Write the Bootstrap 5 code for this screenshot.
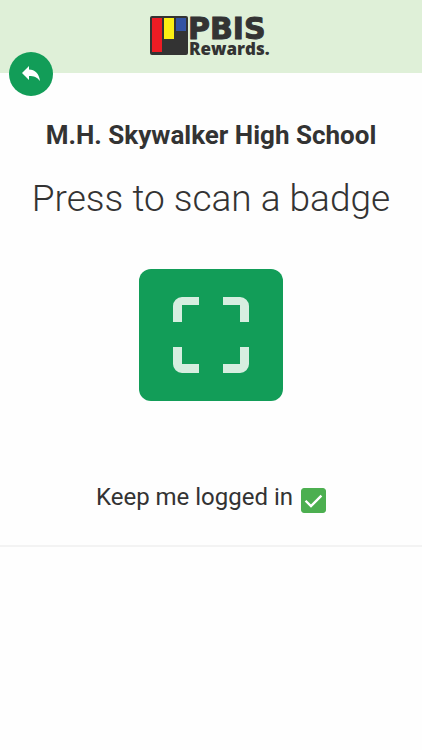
<!DOCTYPE html>
<html lang="en">
<head>
<meta charset="utf-8">
<meta name="viewport" content="width=device-width, initial-scale=1">
<title>PBIS Rewards</title>
<link href="https://cdn.jsdelivr.net/npm/bootstrap@5.3.0/dist/css/bootstrap.min.css" rel="stylesheet">
<style>
  body { font-family: Roboto, "Liberation Sans", sans-serif; color: #333; background: #fefefe; }
  .top-bar { background: #dff0d8; height: 73px; }
  .brand-logo { width: 124px; height: 65px; }
  .brand-logo text { fill: #333; }
  .logo-name { font: 700 30px "DejaVu Sans", sans-serif; }
  .logo-sub { font: 800 17px "Open Sans", "Noto Sans", sans-serif; }
  .back-btn { width: 44px; height: 44px; left: 9px; top: 52px; background: #129d58; color: #fff; }
  .scan-panel { border-bottom: 2px solid #f3f3f3; padding: 46px 0 32px; }
  .school-name { font-size: 26px; line-height: 32px; font-weight: 700; margin-bottom: 24px; }
  .prompt { font-size: 37px; line-height: 48px; font-weight: 300; margin-bottom: 46px; }
  .scan-btn { width: 144px; height: 132px; border-radius: 12px; background: #129d58; color: #d6eee0; margin-bottom: 80px; }
  .keep-row { font-size: 24px; line-height: 32px; gap: 8px; }
  .keep-check.form-check-input { width: 25px; height: 25px; border-radius: 3px; }
  .keep-check.form-check-input:checked {
    background-color: #4caf50; border-color: #4caf50; background-size: 24px 24px;
    background-image: url("data:image/svg+xml,%3Csvg xmlns='http://www.w3.org/2000/svg' viewBox='0 0 24 24'%3E%3Cpath d='M4 12l5.300 5.300L19.500 7' fill='none' stroke='white' stroke-width='2.300'/%3E%3C/svg%3E");
  }
</style>
</head>
<body>
<header class="top-bar position-relative d-flex justify-content-center align-items-center">
  <svg class="brand-logo" viewBox="0 0 124 65" role="img" aria-label="PBIS Rewards">
    <rect x="1" y="12" width="38" height="39" rx="2" fill="#333"/>
    <rect x="3" y="14" width="10" height="34" fill="#ed1c24"/>
    <rect x="15" y="14" width="10" height="21" fill="#fbee13"/>
    <rect x="27" y="14" width="10" height="13" fill="#3353a4"/>
    <text class="logo-name" x="39" y="35" stroke="#333" stroke-width="1">PBIS</text>
    <text class="logo-sub" x="40" y="51">Rewards.</text>
  </svg>
  <button type="button" class="back-btn btn rounded-circle border-0 p-0 position-absolute d-flex justify-content-center align-items-center" aria-label="Back">
    <svg width="20" height="18" viewBox="0 0 20 18" aria-hidden="true"><path fill="currentColor" d="M8 1v3.500c6 0 10 4 11 11.500c-3-4-6-5-11-5v4L1 8z"/></svg>
  </button>
</header>
<main class="scan-panel d-flex flex-column align-items-center text-center">
  <h1 class="school-name">M.H. Skywalker High School</h1>
  <p class="prompt">Press to scan a badge</p>
  <button type="button" class="scan-btn btn border-0 p-0 d-flex justify-content-center align-items-center" aria-label="Scan a badge">
    <svg width="76" height="76" viewBox="0 0 76 76" aria-hidden="true"><path fill="currentColor" d="M0 25V9a9 9 0 0 1 9-9h17v8H9v17zM50 0h17a9 9 0 0 1 9 9v16h-9V8H50zM0 50h9v17h17v9H9a9 9 0 0 1-9-9zM67 50h9v17a9 9 0 0 1-9 9H50v-9h17z"/></svg>
  </button>
  <div class="keep-row d-flex align-items-end">
    <label for="keep">Keep me logged in</label>
    <input class="keep-check form-check-input m-0" type="checkbox" id="keep" checked>
  </div>
</main>
<script src="https://cdn.jsdelivr.net/npm/bootstrap@5.3.0/dist/js/bootstrap.bundle.min.js"></script>
</body>
</html>
